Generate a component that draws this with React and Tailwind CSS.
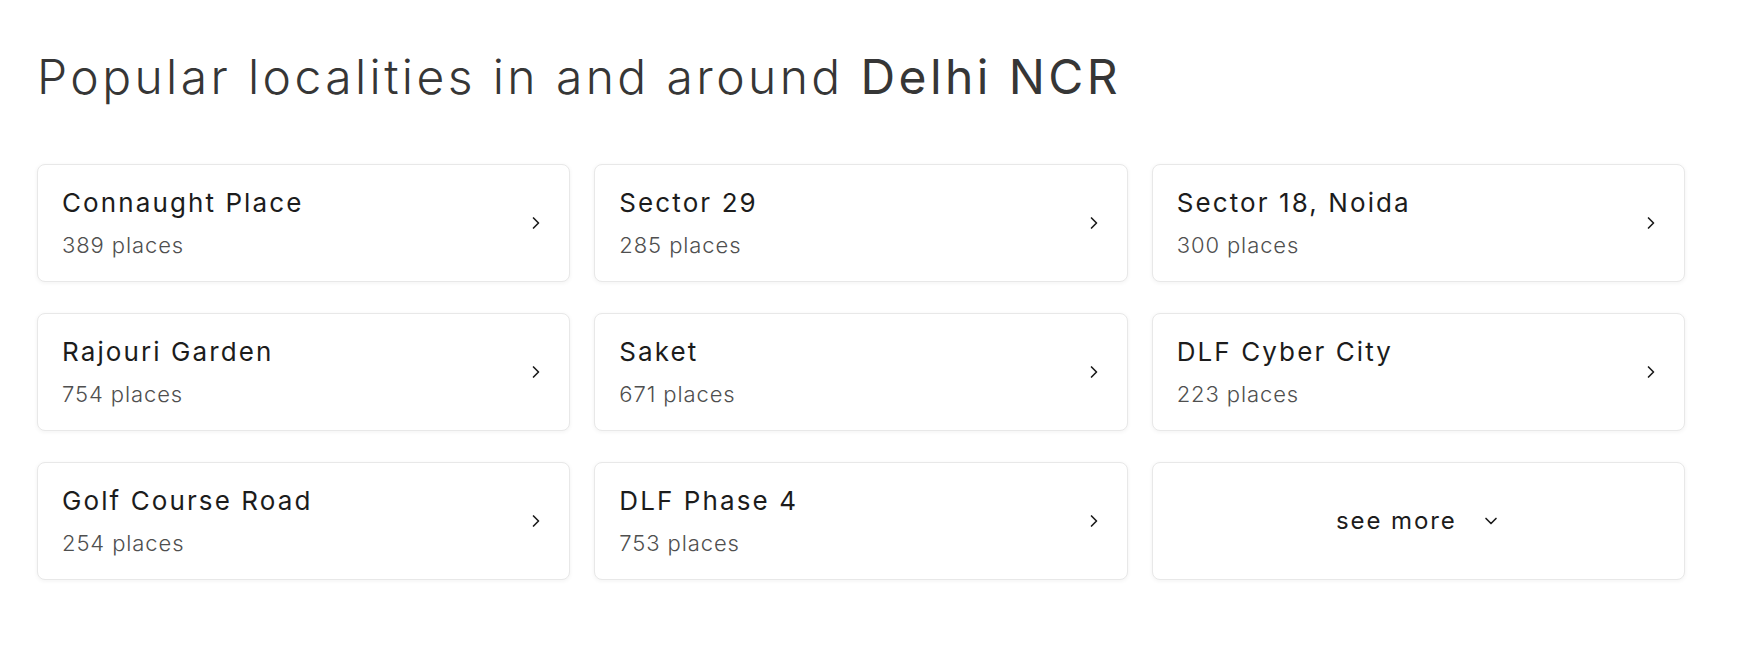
import { ChevronRight, ChevronDown } from 'lucide-react';

const localities = [
  { name: 'Connaught Place', count: 389 },
  { name: 'Sector 29', count: 285 },
  { name: 'Sector 18, Noida', count: 300 },
  { name: 'Rajouri Garden', count: 754 },
  { name: 'Saket', count: 671 },
  { name: 'DLF Cyber City', count: 223 },
  { name: 'Golf Course Road', count: 254 },
  { name: 'DLF Phase 4', count: 753 },
];

const LocalityCard = ({ name, count }) => (
  <div className="flex h-[118px] items-center justify-between rounded-[8px] border border-[#e8e8e8] bg-white pl-[24px] pr-[23px] shadow-[0_1px_4px_rgba(28,28,28,0.06)]">
    <div className="flex flex-col pb-[2px]">
      <h5 className="text-[26px] leading-[36px] font-normal tracking-[2.1px] text-[#1c1c1c]">{name}</h5>
      <p className="mt-[10px] text-[22px] leading-[28px] font-light tracking-[0.9px] text-[#4f4f4f]">{count} places</p>
    </div>
    <ChevronRight className="h-[20px] w-[20px] text-[#1c1c1c]" strokeWidth={2} />
  </div>
);

export default function App() {
  return (
    <div className="min-h-[661px] bg-white font-['Inter',sans-serif]">
      <div className="ml-[37px] w-[1648px] pt-[45px]">
        <h1 className="text-[48px] leading-[64px] font-light tracking-[3.4px] text-[#363636]">
          Popular localities in and around <span className="font-normal">Delhi NCR</span>
        </h1>
        <div className="mt-[55px] grid grid-cols-3 gap-x-[24px] gap-y-[31px]">
          {localities.map((l) => (
            <LocalityCard key={l.name} name={l.name} count={l.count} />
          ))}
          <div className="flex h-[118px] items-center justify-center gap-[24px] rounded-[8px] border border-[#e8e8e8] bg-white shadow-[0_1px_4px_rgba(28,28,28,0.06)]">
            <span className="text-[24px] leading-[32px] tracking-[1.9px] text-[#1c1c1c]">see more</span>
            <ChevronDown className="h-[20px] w-[20px] text-[#1c1c1c]" strokeWidth={2} />
          </div>
        </div>
      </div>
    </div>
  );
}
